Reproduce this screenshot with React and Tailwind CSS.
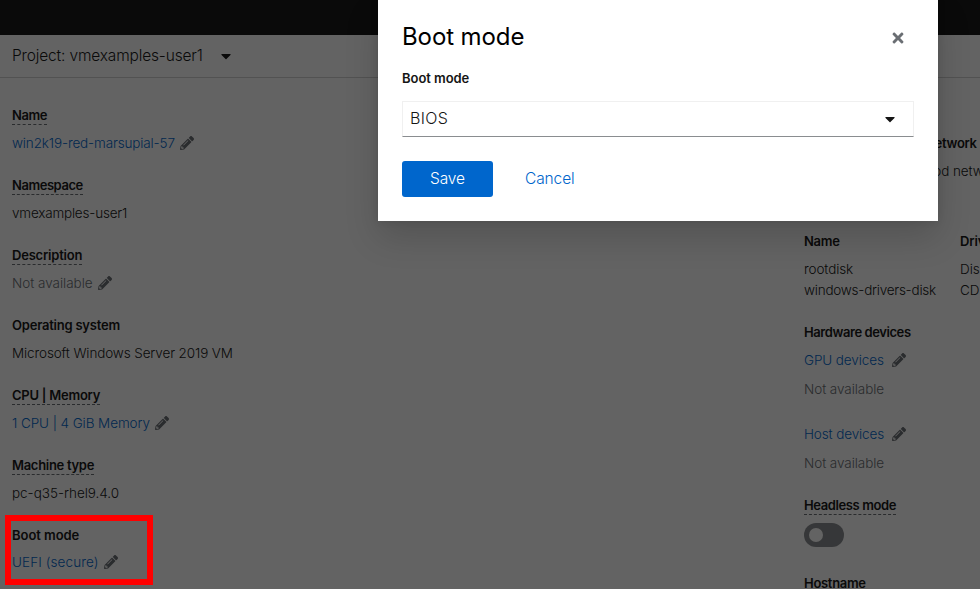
import React from "react";
import { FaCaretDown, FaPencilAlt, FaTimes } from "react-icons/fa";

function Label({ children, dashed = false, className = "" }) {
  return (
    <div className="flex h-[21px]">
      <span
        className={`h-5 whitespace-nowrap text-[13px] leading-[21px] font-semibold text-[#151515] ${
          dashed ? "border-b border-dashed border-[#6a6e73]" : ""
        } ${className}`}
      >
        {children}
      </span>
    </div>
  );
}

function Value({ children, tone = "text-[#151515]", edit = false, gap = "gap-[5px]", className = "" }) {
  return (
    <div className={`flex h-[21px] items-center whitespace-nowrap text-[13.5px] leading-[21px] ${gap} ${tone}`}>
      <span className={className}>{children}</span>
      {edit && <FaPencilAlt className="mb-px size-3.5 shrink-0 text-[#6a6e73]" />}
    </div>
  );
}

const link = "text-[#0066cc]";
const muted = "text-[#6a6e73]";

function Field({ label, dashed, labelClass, children }) {
  return (
    <div className="flex flex-col gap-[7px]">
      <Label dashed={dashed} className={labelClass}>{label}</Label>
      {children}
    </div>
  );
}

function Details() {
  return (
    <div className="flex w-[792px] shrink-0 flex-col gap-[21px] pt-[27px] pl-3">
      <Field label="Name" dashed labelClass="tracking-[-0.4px]">
        <Value tone={link} edit className="tracking-[-0.14px]">win2k19-red-marsupial-57</Value>
      </Field>
      <Field label="Namespace" dashed labelClass="tracking-[-0.45px]">
        <Value className="tracking-[-0.2px]">vmexamples-user1</Value>
      </Field>
      <Field label="Description" dashed labelClass="tracking-[-0.2px]">
        <Value tone={muted} edit className="tracking-[-0.02px]">Not available</Value>
      </Field>
      <Field label="Operating system" labelClass="tracking-[-0.22px]">
        <Value className="tracking-[-0.12px]">Microsoft Windows Server 2019 VM</Value>
      </Field>
      <Field label="CPU | Memory" dashed labelClass="tracking-[-0.25px]">
        <Value tone={link} edit className="tracking-[-0.08px]">1 CPU | 4 GiB Memory</Value>
      </Field>
      <Field label="Machine type" dashed labelClass="tracking-[-0.3px]">
        <Value className="tracking-[-0.03px]">pc-q35-rhel9.4.0</Value>
      </Field>
      <div className="flex flex-col gap-1.5">
        <Label className="tracking-[-0.05px]">Boot mode</Label>
        <Value tone={link} edit className="tracking-[0.1px]">UEFI (secure)</Value>
      </div>
    </div>
  );
}

function Hardware() {
  return (
    <div className="flex w-[400px] shrink-0 flex-col pt-[55px] pl-3">
      <div className="pl-[121px]">
        <Field label="Network" labelClass="tracking-[-0.3px]">
          <Value className="tracking-[-0.1px]">Pod networking</Value>
        </Field>
      </div>
      <div className="mt-[49px] grid grid-cols-[156px_1fr]">
        <Field label="Name" labelClass="tracking-[-0.3px]">
          <div>
            <Value className="tracking-[-0.1px]">rootdisk</Value>
            <Value className="tracking-[-0.24px]">windows-drivers-disk</Value>
          </div>
        </Field>
        <Field label="Drive" labelClass="tracking-[-0.1px]">
          <div>
            <Value>Disk</Value>
            <Value>CD-ROM</Value>
          </div>
        </Field>
      </div>
      <div className="mt-[21px] flex flex-col">
        <Field label="Hardware devices" labelClass="tracking-[-0.42px]">
          <Value tone={link} edit gap="gap-2" className="tracking-[-0.1px]">GPU devices</Value>
        </Field>
        <div className="mt-2"><Value tone={muted} className="tracking-[-0.06px]">Not available</Value></div>
        <div className="mt-6"><Value tone={link} edit gap="gap-2" className="tracking-[-0.12px]">Host devices</Value></div>
        <div className="mt-2"><Value tone={muted} className="tracking-[-0.06px]">Not available</Value></div>
      </div>
      <div className="mt-[21px]"><Label dashed className="tracking-[-0.4px]">Headless mode</Label></div>
      <div className="mt-[7px] flex h-6 w-10 items-center rounded-full bg-[#8a8d90] pl-[5px]">
        <div className="size-3.5 rounded-full bg-white" />
      </div>
      <div className="mt-[26px] h-4">
        <span className="block text-[13px] leading-[21px] font-semibold tracking-[-0.3px]">Hostname</span>
      </div>
    </div>
  );
}

function BootModeDialog() {
  return (
    <div className="absolute top-0 left-[378px] flex h-[221px] w-[560px] flex-col bg-white px-6 pt-5 shadow-[0_16px_32px_0_rgba(3,3,3,0.16),0_0_8px_0_rgba(3,3,3,0.1)]">
      <div className="flex h-8 items-center justify-between">
        <h1 className="pt-0.5 text-2xl leading-8 font-[420] tracking-[-0.1px] text-black">Boot mode</h1>
        <FaTimes className="mt-[3px] mr-2 size-4 text-[#6a6e73]" />
      </div>
      <div className="mt-4"><Label className="tracking-[-0.05px]">Boot mode</Label></div>
      <div className="mt-3 flex h-9 items-center justify-between border border-[#f0f0f0] border-b-[#8a8d90] pr-[15px] pl-[7px]">
        <span className="pb-0.5 text-base font-[350] tracking-[0.3px] text-[#151515]">BIOS</span>
        <FaCaretDown className="mb-px size-4 text-[#151515]" />
      </div>
      <div className="mt-6 flex h-9 items-center gap-8">
        <button className="h-9 w-[91px] rounded-[3px] bg-[#0066cc] text-[15.5px] font-[350] tracking-[-0.1px] text-white">Save</button>
        <button className="text-[15.5px] font-[350] tracking-[-0.1px] text-[#0066cc]">Cancel</button>
      </div>
    </div>
  );
}

export default function App() {
  return (
    <div className="relative h-[589px] w-[980px] overflow-hidden bg-white font-['Inter','Liberation_Sans',sans-serif] font-[350] text-[#151515]">
      <div className="h-[35px] bg-[#151515]" />
      <div className="flex h-[43px] items-center gap-[15px] border-b border-[#d2d2d2] pl-3">
        <span className="text-[15.5px] tracking-[-0.16px]">Project: vmexamples-user1</span>
        <FaCaretDown className="mb-px size-4" />
      </div>
      <div className="flex">
        <Details />
        <Hardware />
      </div>
      <div className="absolute inset-0 bg-[rgba(3,3,3,0.62)]" />
      <BootModeDialog />
      <div className="absolute top-[515px] left-[5px] h-[70px] w-[148px] border-6 border-[#ff0000]" />
    </div>
  );
}
